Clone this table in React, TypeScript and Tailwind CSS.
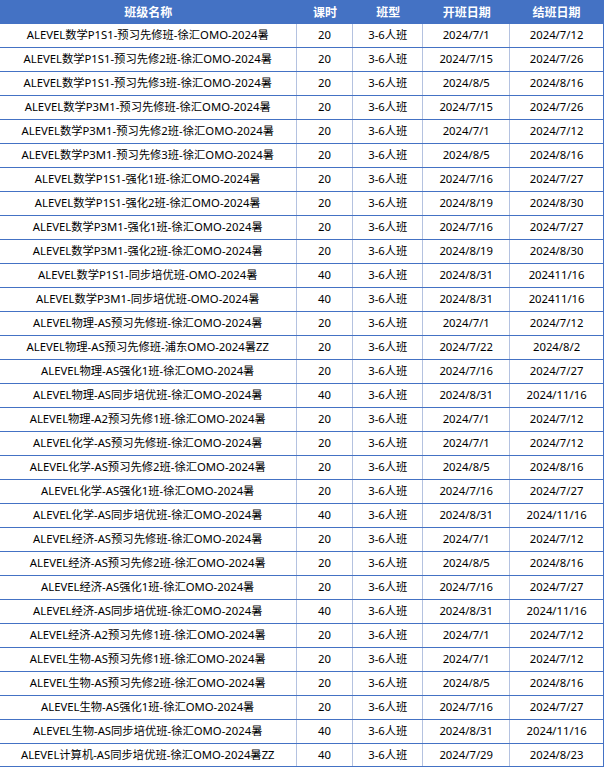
const rows: [string, string, string, string, string][] = [
  ['ALEVEL数学P1S1-预习先修班-徐汇OMO-2024暑', '20', '3-6人班', '2024/7/1', '2024/7/12'],
  ['ALEVEL数学P1S1-预习先修2班-徐汇OMO-2024暑', '20', '3-6人班', '2024/7/15', '2024/7/26'],
  ['ALEVEL数学P1S1-预习先修3班-徐汇OMO-2024暑', '20', '3-6人班', '2024/8/5', '2024/8/16'],
  ['ALEVEL数学P3M1-预习先修班-徐汇OMO-2024暑', '20', '3-6人班', '2024/7/15', '2024/7/26'],
  ['ALEVEL数学P3M1-预习先修2班-徐汇OMO-2024暑', '20', '3-6人班', '2024/7/1', '2024/7/12'],
  ['ALEVEL数学P3M1-预习先修3班-徐汇OMO-2024暑', '20', '3-6人班', '2024/8/5', '2024/8/16'],
  ['ALEVEL数学P1S1-强化1班-徐汇OMO-2024暑', '20', '3-6人班', '2024/7/16', '2024/7/27'],
  ['ALEVEL数学P1S1-强化2班-徐汇OMO-2024暑', '20', '3-6人班', '2024/8/19', '2024/8/30'],
  ['ALEVEL数学P3M1-强化1班-徐汇OMO-2024暑', '20', '3-6人班', '2024/7/16', '2024/7/27'],
  ['ALEVEL数学P3M1-强化2班-徐汇OMO-2024暑', '20', '3-6人班', '2024/8/19', '2024/8/30'],
  ['ALEVEL数学P1S1-同步培优班-OMO-2024暑', '40', '3-6人班', '2024/8/31', '202411/16'],
  ['ALEVEL数学P3M1-同步培优班-OMO-2024暑', '40', '3-6人班', '2024/8/31', '202411/16'],
  ['ALEVEL物理-AS预习先修班-徐汇OMO-2024暑', '20', '3-6人班', '2024/7/1', '2024/7/12'],
  ['ALEVEL物理-AS预习先修班-浦东OMO-2024暑ZZ', '20', '3-6人班', '2024/7/22', '2024/8/2'],
  ['ALEVEL物理-AS强化1班-徐汇OMO-2024暑', '20', '3-6人班', '2024/7/16', '2024/7/27'],
  ['ALEVEL物理-AS同步培优班-徐汇OMO-2024暑', '40', '3-6人班', '2024/8/31', '2024/11/16'],
  ['ALEVEL物理-A2预习先修1班-徐汇OMO-2024暑', '20', '3-6人班', '2024/7/1', '2024/7/12'],
  ['ALEVEL化学-AS预习先修班-徐汇OMO-2024暑', '20', '3-6人班', '2024/7/1', '2024/7/12'],
  ['ALEVEL化学-AS预习先修2班-徐汇OMO-2024暑', '20', '3-6人班', '2024/8/5', '2024/8/16'],
  ['ALEVEL化学-AS强化1班-徐汇OMO-2024暑', '20', '3-6人班', '2024/7/16', '2024/7/27'],
  ['ALEVEL化学-AS同步培优班-徐汇OMO-2024暑', '40', '3-6人班', '2024/8/31', '2024/11/16'],
  ['ALEVEL经济-AS预习先修班-徐汇OMO-2024暑', '20', '3-6人班', '2024/7/1', '2024/7/12'],
  ['ALEVEL经济-AS预习先修2班-徐汇OMO-2024暑', '20', '3-6人班', '2024/8/5', '2024/8/16'],
  ['ALEVEL经济-AS强化1班-徐汇OMO-2024暑', '20', '3-6人班', '2024/7/16', '2024/7/27'],
  ['ALEVEL经济-AS同步培优班-徐汇OMO-2024暑', '40', '3-6人班', '2024/8/31', '2024/11/16'],
  ['ALEVEL经济-A2预习先修1班-徐汇OMO-2024暑', '20', '3-6人班', '2024/7/1', '2024/7/12'],
  ['ALEVEL生物-AS预习先修1班-徐汇OMO-2024暑', '20', '3-6人班', '2024/7/1', '2024/7/12'],
  ['ALEVEL生物-AS预习先修2班-徐汇OMO-2024暑', '20', '3-6人班', '2024/8/5', '2024/8/16'],
  ['ALEVEL生物-AS强化1班-徐汇OMO-2024暑', '20', '3-6人班', '2024/7/16', '2024/7/27'],
  ['ALEVEL生物-AS同步培优班-徐汇OMO-2024暑', '40', '3-6人班', '2024/8/31', '2024/11/16'],
  ['ALEVEL计算机-AS同步培优班-徐汇OMO-2024暑ZZ', '40', '3-6人班', '2024/7/29', '2024/8/23'],
];

const headers = ['班级名称', '课时', '班型', '开班日期', '结班日期'];
const widths = ['w-[297px]', 'w-[57px]', 'w-[70px]', 'w-[87px]', 'w-[93px]'];

const App = () => {
  return (
    <div className="w-[605px] bg-white font-['Noto_Sans','Noto_Sans_CJK_SC',sans-serif] text-[11.3px] text-black">
      <div className="w-[604px] border-r border-[#4472c4]">
        {/* header */}
        <div className="flex h-[23px] bg-[#4472c4] text-white font-bold text-[12px] font-['Noto_Sans_CJK_SC',sans-serif]">
          {headers.map((h, i) => (
            <div key={h} className={`${widths[i]} flex items-center justify-center`}>
              {h}
            </div>
          ))}
        </div>
        {rows.map((r, ri) => (
          <div
            key={ri}
            className={`flex h-[24px] border-t border-[#4472c4] ${ri === rows.length - 1 ? 'border-b' : ''}`}
          >
            {r.map((c, ci) => (
              <div
                key={ci}
                className={`${widths[ci]} flex items-center justify-center whitespace-nowrap ${
                  ci < 4 ? 'border-r border-[#b4c2e0]' : ''
                }`}
              >
                {c}
              </div>
            ))}
          </div>
        ))}
      </div>
    </div>
  );
};

export default App;
